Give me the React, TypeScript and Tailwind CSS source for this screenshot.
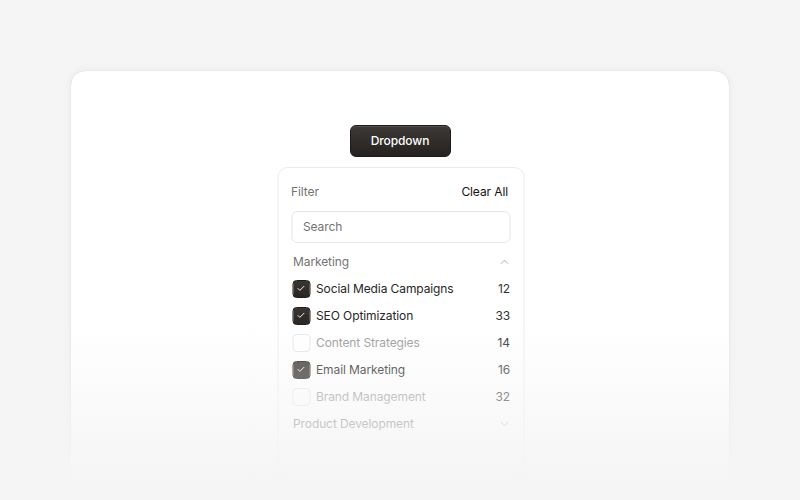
import { ChevronUp, ChevronDown, Check } from "lucide-react";

type Item = { label: string; count: number; checked: boolean };

const marketing: Item[] = [
  { label: "Social Media Campaigns", count: 12, checked: true },
  { label: "SEO Optimization", count: 33, checked: true },
  { label: "Content Strategies", count: 14, checked: false },
  { label: "Email Marketing", count: 16, checked: true },
  { label: "Brand Management", count: 32, checked: false },
];

function Row({ item }: { item: Item }) {
  return (
    <div className="h-[27px] flex items-center">
      <div
        className={
          item.checked
            ? "ml-px w-[18px] h-[18px] rounded-[4px] bg-gradient-to-b from-[#3a3633] to-[#2a2623] border border-[#1f1c1a] flex items-center justify-center"
            : "ml-px w-[18px] h-[18px] rounded-[4px] bg-white border border-[#e6e6e6]"
        }
      >
        {item.checked && <Check size={9} strokeWidth={2.5} className="text-white" />}
      </div>
      <span className={item.checked ? "ml-[6px] flex-1 text-[#262626]" : "ml-[6px] flex-1 text-[#999999]"}>
        {item.label}
      </span>
      <span className="text-[#333333]">{item.count}</span>
    </div>
  );
}

export default function App() {
  return (
    <div className="relative h-[500px] w-[800px] overflow-hidden bg-[#f5f5f5] font-['Inter',sans-serif] text-[12px] tracking-[-0.1px]">
      <div className="mx-[70px] mt-[70px] h-[520px] rounded-2xl bg-white border border-[#e8e8e8] shadow-[0_0_10px_rgba(0,0,0,0.05)] flex flex-col items-center pt-[54px]">
        <button className="w-[101px] h-[32px] rounded-[6px] bg-gradient-to-b from-[#3d3936] to-[#26221f] border border-[#1c1917] text-white font-medium shadow-[inset_0_1px_0_rgba(255,255,255,0.12)]">
          Dropdown
        </button>

        <div className="mt-[10px] w-[247px] translate-x-[0.5px] rounded-[10px] border border-[#ececec] bg-white px-[13px] pt-[14px] pb-4">
          <div className="h-[20px] flex items-center justify-between">
            <span className="text-[#737373]">Filter</span>
            <span className="mr-[2px] text-[#111111]">Clear All</span>
          </div>
          <div className="mt-[9px] h-[32px] rounded-[6px] border border-[#e5e5e5] flex items-center pl-[11px] text-[#737373]">
            Search
          </div>
          <div className="mt-[9px] h-[20px] flex items-center justify-between pl-[2px]">
            <span className="text-[#737373]">Marketing</span>
            <ChevronUp size={14} className="mr-[-1px] text-[#d4d4d4]" />
          </div>
          <div className="mt-[3px]">
            {marketing.map((item) => (
              <Row key={item.label} item={item} />
            ))}
          </div>
          <div className="h-[27px] flex items-center justify-between pl-[2px] pt-px">
            <span className="text-[#737373]">Product Development</span>
            <ChevronDown size={14} className="mr-[-1px] text-[#d4d4d4]" />
          </div>
          <div className="h-[27px]" />
        </div>
      </div>

      {/* fade out the bottom of the card */}
      <div className="absolute inset-x-0 top-[322px] bottom-0 bg-[linear-gradient(to_bottom,rgba(245,245,245,0)_0px,#f5f5f5_160px)]" />
    </div>
  );
}
